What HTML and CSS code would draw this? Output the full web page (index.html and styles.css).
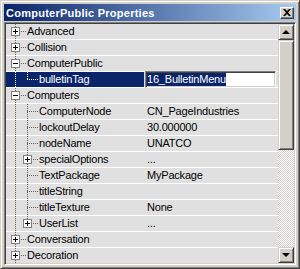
FILE: index.html
```html
<!DOCTYPE html>
<html lang="en">
<head>
    <meta charset="UTF-8">
    <title>ComputerPublic Properties</title>
    <link rel="stylesheet" href="styles.css">
</head>
<body>
    <div class="window">
        <div class="titlebar">
            <span class="title">ComputerPublic Properties</span>
            <div class="close">
                <svg width="8" height="7" viewBox="0 0 8 7"><path d="M0 0h2l2 2 2-2h2L5 3.5 8 7H6L4 5 2 7H0l3-3.5z" fill="#000"/></svg>
            </div>
        </div>

        <div class="list">
            <div class="rows">
                <div class="row">
                    <div class="name"><span class="cell t"><span class="box plus"></span></span><span class="hook"></span>Advanced</div>
                    <div class="value"></div>
                </div>
                <div class="row">
                    <div class="name"><span class="cell t"><span class="box plus"></span></span><span class="hook"></span>Collision</div>
                    <div class="value"></div>
                </div>
                <div class="row">
                    <div class="name"><span class="cell t"><span class="box"></span></span><span class="hook"></span>ComputerPublic</div>
                    <div class="value"></div>
                </div>
                <div class="row sel">
                    <div class="name"><span class="cell v"></span><span class="cell l"></span><span class="hook"></span>bulletinTag</div>
                    <div class="value editing"><div class="edit"><span class="picked">16_BulletinMenu</span></div></div>
                </div>
                <div class="row">
                    <div class="name"><span class="cell t"><span class="box"></span></span><span class="hook"></span>Computers</div>
                    <div class="value"></div>
                </div>
                <div class="row">
                    <div class="name"><span class="cell v"></span><span class="cell t"></span><span class="hook"></span>ComputerNode</div>
                    <div class="value">CN_PageIndustries</div>
                </div>
                <div class="row">
                    <div class="name"><span class="cell v"></span><span class="cell t"></span><span class="hook"></span>lockoutDelay</div>
                    <div class="value">30.000000</div>
                </div>
                <div class="row">
                    <div class="name"><span class="cell v"></span><span class="cell t"></span><span class="hook"></span>nodeName</div>
                    <div class="value">UNATCO</div>
                </div>
                <div class="row">
                    <div class="name"><span class="cell v"></span><span class="cell t"><span class="box plus"></span></span><span class="hook"></span>specialOptions</div>
                    <div class="value">...</div>
                </div>
                <div class="row">
                    <div class="name"><span class="cell v"></span><span class="cell t"></span><span class="hook"></span>TextPackage</div>
                    <div class="value">MyPackage</div>
                </div>
                <div class="row">
                    <div class="name"><span class="cell v"></span><span class="cell t"></span><span class="hook"></span>titleString</div>
                    <div class="value"></div>
                </div>
                <div class="row">
                    <div class="name"><span class="cell v"></span><span class="cell t"></span><span class="hook"></span>titleTexture</div>
                    <div class="value">None</div>
                </div>
                <div class="row">
                    <div class="name"><span class="cell v"></span><span class="cell l"><span class="box plus"></span></span><span class="hook"></span>UserList</div>
                    <div class="value">...</div>
                </div>
                <div class="row">
                    <div class="name"><span class="cell t"><span class="box plus"></span></span><span class="hook"></span>Conversation</div>
                    <div class="value"></div>
                </div>
                <div class="row">
                    <div class="name"><span class="cell t"><span class="box plus"></span></span><span class="hook"></span>Decoration</div>
                    <div class="value"></div>
                </div>
            </div>

            <div class="scrollbar">
                <div class="sbtn"><span class="arrow up"></span></div>
                <div class="thumb"></div>
                <div class="track"></div>
                <div class="sbtn"><span class="arrow down"></span></div>
            </div>
        </div>
    </div>
</body>
</html>
```

FILE: styles.css
```css
* {
    box-sizing: border-box;
}

body {
    margin: 0;
    font-family: "Liberation Sans", Arial, sans-serif;
    font-size: 11px;
    color: #000;
}

.window {
    width: 300px;
    height: 269px;
    display: flex;
    flex-direction: column;
    padding: 3px;
    background-color: #d4d0c8;
    border: 1px solid;
    border-color: #d4d0c8 #404040 #404040 #d4d0c8;
    box-shadow: inset 1px 1px #fff, inset -1px -1px #808080;
}

.titlebar {
    flex: none;
    height: 17px;
    margin-bottom: 1px;
    padding: 0 2px;
    display: flex;
    align-items: center;
    justify-content: space-between;
    background: linear-gradient(to right, #0a246a, #a6caf0);
    color: #fff;
    font-weight: bold;
    letter-spacing: 0.25px;
}

.close {
    width: 14px;
    height: 12px;
    display: flex;
    align-items: center;
    justify-content: center;
    background-color: #d4d0c8;
    border: 1px solid;
    border-color: #fff #404040 #404040 #fff;
    box-shadow: inset -1px -1px #808080;
}

/* sunken property list */
.list {
    flex: 1;
    min-height: 0;
    display: flex;
    padding: 1px;
    border: 1px solid;
    border-color: #808080 #fff #fff #808080;
    box-shadow: inset 1px 1px #404040, inset -1px -1px #d4d0c8;
}

.rows {
    flex: 1;
    overflow: hidden;
    background-color: #e0e0e0;
}

.row {
    --dot: #606060;
    display: flex;
    height: 16px;
    line-height: 15px;
    border-bottom: 1px solid #fff;
    background-color: #e0e0e0;
    letter-spacing: -0.2px;
}

.name {
    width: 138px;
    flex: none;
    display: flex;
    align-items: center;
    padding-left: 3px;
    white-space: nowrap;
}

.value {
    flex: 1;
    padding-left: 3px;
    white-space: nowrap;
}

.sel {
    --dot: #fff;
}

.sel .name {
    background-color: #0a246a;
    color: #fff;
}

.value.editing {
    padding-left: 0;
}

.edit {
    height: 17px;
    margin: -1px 2px 0 1px;
    line-height: 13px;
    background-color: #fff;
    border: 1px solid;
    border-color: #808080 #fff #fff #808080;
    box-shadow: inset 1px 1px #404040, inset -1px -1px #d4d0c8;
    padding: 1px;
}

.picked {
    display: inline-block;
    background-color: #0a246a;
    color: #fff;
}

/* tree guides */
.cell {
    width: 12px;
    height: 15px;
    flex: none;
    display: flex;
    align-items: center;
}

.v {
    background: repeating-linear-gradient(var(--dot) 0 1px, transparent 1px 2px) 6px 0 / 1px 15px no-repeat;
}

.t {
    background:
        repeating-linear-gradient(var(--dot) 0 1px, transparent 1px 2px) 6px 0 / 1px 15px no-repeat,
        repeating-linear-gradient(to right, var(--dot) 0 1px, transparent 1px 2px) 6px 7px / 6px 1px no-repeat;
}

.l {
    background:
        repeating-linear-gradient(var(--dot) 0 1px, transparent 1px 2px) 6px 0 / 1px 8px no-repeat,
        repeating-linear-gradient(to right, var(--dot) 0 1px, transparent 1px 2px) 6px 7px / 6px 1px no-repeat;
}

.hook {
    width: 6px;
    height: 15px;
    flex: none;
    margin-right: 0;
    background: repeating-linear-gradient(to right, var(--dot) 0 1px, transparent 1px 2px) 0 7px / 6px 1px no-repeat;
}

.box {
    position: relative;
    width: 9px;
    height: 9px;
    margin-left: 2px;
    background-color: #fff;
    border: 1px solid #808080;
}

.box::before {
    content: "";
    position: absolute;
    left: 1px;
    top: 3px;
    width: 5px;
    height: 1px;
    background-color: #000;
}

.box.plus::after {
    content: "";
    position: absolute;
    left: 3px;
    top: 1px;
    width: 1px;
    height: 5px;
    background-color: #000;
}

/* scrollbar */
.scrollbar {
    width: 16px;
    flex: none;
    display: flex;
    flex-direction: column;
}

.sbtn, .thumb {
    background-color: #d4d0c8;
    border: 1px solid;
    border-color: #d4d0c8 #404040 #404040 #d4d0c8;
    box-shadow: inset 1px 1px #fff, inset -1px -1px #808080;
}

.sbtn {
    height: 16px;
    flex: none;
    display: flex;
    align-items: center;
    justify-content: center;
}

.thumb {
    height: 110px;
    flex: none;
}

.track {
    flex: 1;
    background: repeating-conic-gradient(#fff 0 25%, #d4d0c8 0 50%) 0 0 / 2px 2px;
}

.arrow {
    width: 0;
    height: 0;
    border-left: 4px solid transparent;
    border-right: 4px solid transparent;
}

.arrow.up {
    border-bottom: 4px solid #000;
}

.arrow.down {
    border-top: 4px solid #000;
}
```
